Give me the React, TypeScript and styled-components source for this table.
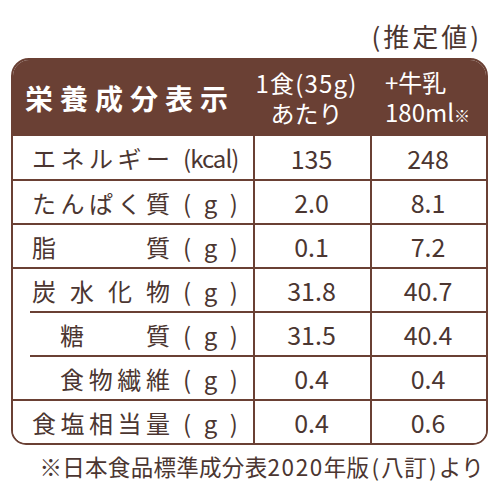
import styled, { createGlobalStyle } from "styled-components";

const BROWN = "#6a4034";
const INK = "#4b3631";

const GlobalStyle = createGlobalStyle`
  html, body {
    margin: 0;
    padding: 0;
    background: #ffffff;
  }
  body {
    font-family: "Noto Sans CJK JP", "Noto Sans", sans-serif;
    color: ${INK};
  }
`;

const Page = styled.div`
  width: 500px;
  height: 500px;
  box-sizing: border-box;
  padding: 20px 12px 0 11px;
  display: flex;
  flex-direction: column;
`;

const Caption = styled.div`
  text-align: right;
  font-size: 26px;
  line-height: 32px;
  height: 32px;
  letter-spacing: 3px;
  margin-right: 6px;
`;

const Table = styled.div`
  margin-top: 6px;
  width: 477px;
  box-sizing: border-box;
  border: 2px solid ${BROWN};
  border-radius: 18px 18px 15px 15px;
  overflow: hidden;
`;

const Row = styled.div<{ $header?: boolean }>`
  display: grid;
  grid-template-columns: 240px 117px 116px;
  background: ${(p) => (p.$header ? BROWN : "#ffffff")};
  color: ${(p) => (p.$header ? "#ffffff" : INK)};
`;

const HeaderTitle = styled.div`
  height: 76px;
  display: flex;
  align-items: center;
  padding-left: 12px;
  font-size: 28px;
  font-weight: 700;
  letter-spacing: 7px;
`;

const HeaderCell = styled.div<{ $left?: boolean }>`
  height: 76px;
  display: flex;
  flex-direction: column;
  justify-content: center;
  align-items: ${(p) => (p.$left ? "flex-start" : "center")};
  text-align: ${(p) => (p.$left ? "left" : "center")};
  padding-left: ${(p) => (p.$left ? "15px" : "0")};
  padding-right: ${(p) => (p.$left ? "0" : "10px")};
  font-size: 24px;
  line-height: 30px;
  box-sizing: border-box;
`;

const Spaced = styled.span`
  letter-spacing: 1.2px;
`;

const Mark = styled.span`
  font-size: 16px;
  font-weight: 700;
`;

const LabelCell = styled.div<{ $first?: boolean; $inset?: boolean }>`
  height: ${(p) => (p.$first ? "43px" : "44px")};
  box-sizing: border-box;
  border-top: ${(p) => (p.$first ? "none" : `2px solid ${BROWN}`)};
  margin-left: ${(p) => (p.$inset ? "17px" : "0")};
  padding-left: ${(p) => (p.$inset ? "2px" : "19px")};
  padding-right: 15px;
  display: flex;
  align-items: center;
  font-size: 24px;
`;

const Name = styled.div<{ $sub?: boolean }>`
  flex: 1;
  display: flex;
  justify-content: space-between;
  margin-left: ${(p) => (p.$sub ? "28px" : "0")};
`;

const Unit = styled.div`
  width: 55px;
  margin-left: 13px;
  display: flex;
  justify-content: space-between;
  font-size: 24px;
`;

const ValueCell = styled.div<{ $first?: boolean }>`
  height: ${(p) => (p.$first ? "43px" : "44px")};
  box-sizing: border-box;
  border-top: ${(p) => (p.$first ? "none" : `2px solid ${BROWN}`)};
  border-left: 2px solid ${BROWN};
  display: flex;
  align-items: center;
  justify-content: center;
  font-size: 25px;
  padding-right: 2px;
`;

const Footnote = styled.div`
  margin-top: 8px;
  text-align: right;
  font-size: 22.5px;
  line-height: 26px;
  letter-spacing: 0.3px;
  padding-right: 4px;
`;

const Digits = styled.span`
  letter-spacing: 1.6px;
`;

const Paren = styled.span`
  padding: 0 2px;
`;

type Item = {
  name: string;
  unit: string;
  perServing: string;
  withMilk: string;
  sub?: boolean;
  inset?: boolean;
};

const items: Item[] = [
  { name: "エネルギー", unit: "kcal", perServing: "135", withMilk: "248" },
  { name: "たんぱく質", unit: "g", perServing: "2.0", withMilk: "8.1" },
  { name: "脂質", unit: "g", perServing: "0.1", withMilk: "7.2" },
  { name: "炭水化物", unit: "g", perServing: "31.8", withMilk: "40.7" },
  { name: "糖質", unit: "g", perServing: "31.5", withMilk: "40.4", sub: true, inset: true },
  { name: "食物繊維", unit: "g", perServing: "0.4", withMilk: "0.4", sub: true, inset: true },
  { name: "食塩相当量", unit: "g", perServing: "0.4", withMilk: "0.6" },
];

function renderUnit(unit: string) {
  if (unit === "g") {
    return (
      <Unit>
        <span>(</span>
        <span>g</span>
        <span>)</span>
      </Unit>
    );
  }
  return (
    <Unit>
      <span style={{ letterSpacing: "-1px" }}>({unit})</span>
    </Unit>
  );
}

export default function App() {
  return (
    <>
      <GlobalStyle />
      <Page>
        <Caption>(推定値)</Caption>
        <Table>
          <Row $header>
            <HeaderTitle>栄養成分表示</HeaderTitle>
            <HeaderCell>
              <div>
                <Spaced>1食(35g)</Spaced>
                <br />
                あたり
              </div>
            </HeaderCell>
            <HeaderCell $left>
              <div>
                +牛乳
                <br />
                180ml<Mark>※</Mark>
              </div>
            </HeaderCell>
          </Row>
          {items.map((item, i) => (
            <Row key={item.name}>
              <LabelCell $first={i === 0} $inset={item.inset}>
                <Name $sub={item.sub}>
                  {Array.from(item.name).map((ch, j) => (
                    <span key={j}>{ch}</span>
                  ))}
                </Name>
                {renderUnit(item.unit)}
              </LabelCell>
              <ValueCell $first={i === 0}>{item.perServing}</ValueCell>
              <ValueCell $first={i === 0}>{item.withMilk}</ValueCell>
            </Row>
          ))}
        </Table>
        <Footnote>
          ※日本食品標準成分表<Digits>2020</Digits>年版<Paren>(</Paren>八訂
          <Paren>)</Paren>より
        </Footnote>
      </Page>
    </>
  );
}
